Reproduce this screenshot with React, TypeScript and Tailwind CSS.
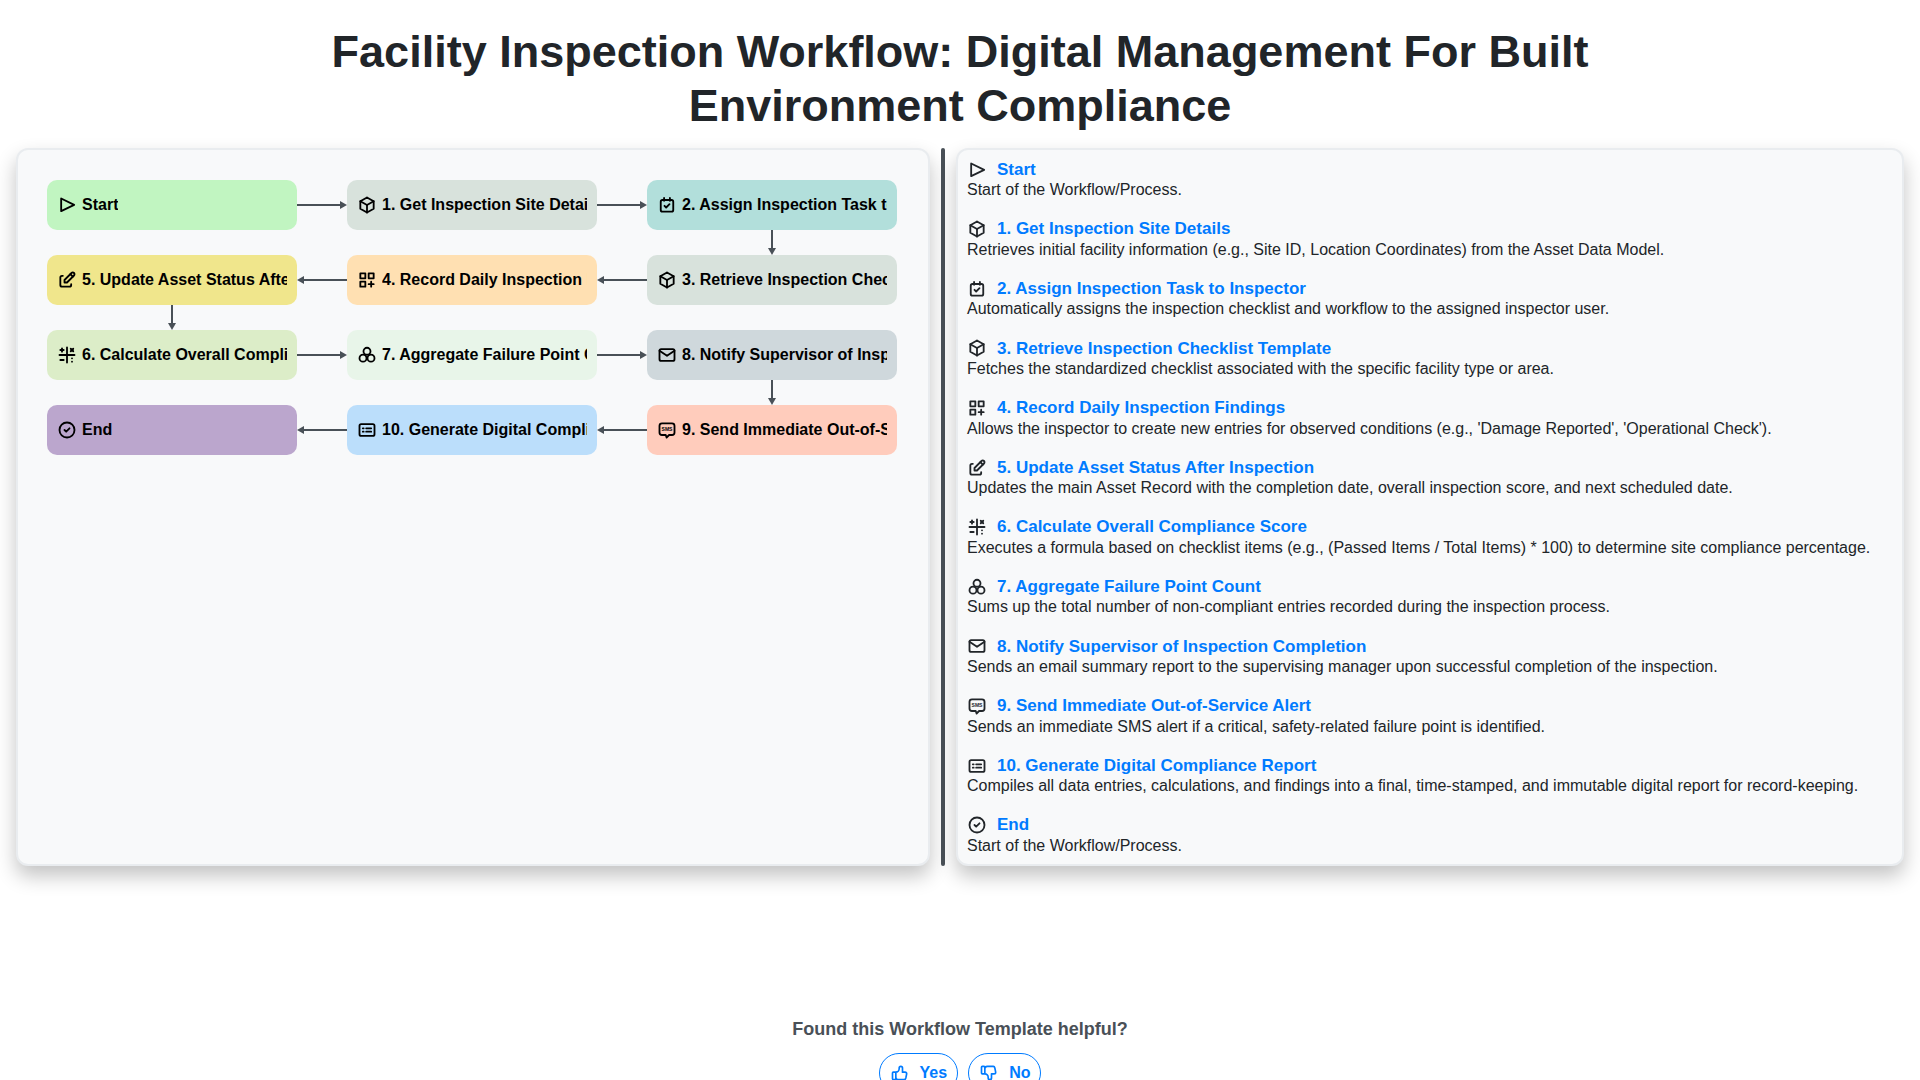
import type { ReactNode } from "react";
import { TbBox, TbEdit, TbCategoryPlus, TbMathSymbols, TbMail, TbCircleCheck, TbThumbUp, TbThumbDown } from "react-icons/tb";

const ic = { size: 20, strokeWidth: 2.2, className: "shrink-0" };

function Svg({ children }: { children: ReactNode }) {
  return (
    <svg xmlns="http://www.w3.org/2000/svg" width="20" height="20" viewBox="0 0 24 24" fill="none" stroke="currentColor" strokeWidth="2.2" strokeLinecap="round" strokeLinejoin="round" className="shrink-0">
      {children}
    </svg>
  );
}

const Play = () => (
  <Svg>
    <path d="M5 4.2l15.6 7.6L5 19.4z" />
  </Svg>
);

const CalendarTick = () => (
  <Svg>
    <rect x="4.5" y="6" width="15" height="14" rx="2" />
    <path d="M8.5 3.5V7M15.5 3.5V7M9 13l2 2 4-4" />
  </Svg>
);

const Cluster = () => (
  <Svg>
    <circle cx="12" cy="7.5" r="4.2" />
    <circle cx="7.2" cy="15.8" r="4.2" />
    <circle cx="16.8" cy="15.8" r="4.2" />
  </Svg>
);

const SmsBubble = () => (
  <Svg>
    <path d="M6 4h12a3 3 0 0 1 3 3v8a3 3 0 0 1-3 3h-3.5l-3 3-1-3H6a3 3 0 0 1-3-3V7a3 3 0 0 1 3-3z" />
    <text x="12" y="13.5" textAnchor="middle" fontSize="6" fontWeight="700" fontFamily="Liberation Sans" fill="currentColor" stroke="none">SMS</text>
  </Svg>
);

const ListCard = () => (
  <Svg>
    <rect x="3" y="5" width="18" height="14" rx="2" />
    <path d="M7 10h1M11 10h6M7 14h1M11 14h6" />
  </Svg>
);

const steps = [
  { icon: <Play />, title: "Start", text: "Start of the Workflow/Process." },
  { icon: <TbBox {...ic} />, title: "1. Get Inspection Site Details", text: "Retrieves initial facility information (e.g., Site ID, Location Coordinates) from the Asset Data Model." },
  { icon: <CalendarTick />, title: "2. Assign Inspection Task to Inspector", text: "Automatically assigns the inspection checklist and workflow to the assigned inspector user." },
  { icon: <TbBox {...ic} />, title: "3. Retrieve Inspection Checklist Template", text: "Fetches the standardized checklist associated with the specific facility type or area." },
  { icon: <TbCategoryPlus {...ic} />, title: "4. Record Daily Inspection Findings", text: "Allows the inspector to create new entries for observed conditions (e.g., 'Damage Reported', 'Operational Check')." },
  { icon: <TbEdit {...ic} />, title: "5. Update Asset Status After Inspection", text: "Updates the main Asset Record with the completion date, overall inspection score, and next scheduled date." },
  { icon: <TbMathSymbols {...ic} />, title: "6. Calculate Overall Compliance Score", text: "Executes a formula based on checklist items (e.g., (Passed Items / Total Items) * 100) to determine site compliance percentage." },
  { icon: <Cluster />, title: "7. Aggregate Failure Point Count", text: "Sums up the total number of non-compliant entries recorded during the inspection process." },
  { icon: <TbMail {...ic} />, title: "8. Notify Supervisor of Inspection Completion", text: "Sends an email summary report to the supervising manager upon successful completion of the inspection." },
  { icon: <SmsBubble />, title: "9. Send Immediate Out-of-Service Alert", text: "Sends an immediate SMS alert if a critical, safety-related failure point is identified." },
  { icon: <ListCard />, title: "10. Generate Digital Compliance Report", text: "Compiles all data entries, calculations, and findings into a final, time-stamped, and immutable digital report for record-keeping." },
  { icon: <TbCircleCheck {...ic} />, title: "End", text: "Start of the Workflow/Process." },
];

function Node({ step, className }: { step: number; className: string }) {
  return (
    <div className={`flex h-[50px] items-center gap-[5px] rounded-[10px] px-[10px] text-base font-bold text-black ${className}`}>
      {steps[step].icon}
      <span className="overflow-hidden whitespace-nowrap">{steps[step].title}</span>
    </div>
  );
}

function ArrowH({ left }: { left?: boolean }) {
  return (
    <svg viewBox="0 0 50 10" className={`h-[10px] w-[50px] self-center text-[#495057] ${left ? "rotate-180" : ""}`} fill="currentColor">
      <rect x="0" y="4" width="46" height="2" />
      <path d="M50 5l-7-4v8z" />
    </svg>
  );
}

function ArrowV() {
  return (
    <svg viewBox="0 0 10 25" className="h-[25px] w-[10px] justify-self-center text-[#495057]" fill="currentColor">
      <rect x="4" y="0" width="2" height="21" />
      <path d="M5 25l-4-7h8z" />
    </svg>
  );
}

export default function App() {
  return (
    <div className="bg-white font-['Liberation_Sans',Arial,sans-serif] text-[#212529]">
      <h1 className="mx-auto max-w-[1300px] px-4 pt-[25px] pb-[15px] text-center text-[45px] leading-[54px] font-bold">
        Facility Inspection Workflow: Digital Management For Built Environment Compliance
      </h1>

      <div className="flex items-stretch px-4">
        <div className="w-[914px] rounded-xl border-2 border-[#e9ecef] bg-[#f8f9fa] pt-[30px] pl-[29px] shadow-[0_10px_20px_rgba(0,0,0,0.24)]">
          <div className="grid grid-cols-[250px_50px_250px_50px_250px] grid-rows-[50px_25px_50px_25px_50px_25px_50px]">
            <Node step={0} className="bg-[#c1f5c1]" />
            <ArrowH />
            <Node step={1} className="bg-[#d8e2dc]" />
            <ArrowH />
            <Node step={2} className="bg-[#b2dfdb]" />

            <div className="col-span-4" />
            <ArrowV />

            <Node step={5} className="bg-[#f0e68c]" />
            <ArrowH left />
            <Node step={4} className="bg-[#ffe0b2]" />
            <ArrowH left />
            <Node step={3} className="bg-[#d8e2dc]" />

            <ArrowV />
            <div className="col-span-4" />

            <Node step={6} className="bg-[#dcedc8]" />
            <ArrowH />
            <Node step={7} className="bg-[#e8f5e9]" />
            <ArrowH />
            <Node step={8} className="bg-[#cfd8dc]" />

            <div className="col-span-4" />
            <ArrowV />

            <Node step={11} className="bg-[#bba6cd]" />
            <ArrowH left />
            <Node step={10} className="bg-[#bbdefb]" />
            <ArrowH left />
            <Node step={9} className="bg-[#ffccbc]" />
          </div>
        </div>

        <div className="mx-[11px] w-1 rounded-sm bg-[#495057]" />

        <div className="w-[948px] rounded-xl border-2 border-[#e9ecef] bg-[#f8f9fa] px-[9px] pt-[9px] pb-[9px] shadow-[0_10px_20px_rgba(0,0,0,0.24)]">
          {steps.map((s, i) => (
            <div key={s.title} className={i < steps.length - 1 ? "mb-[19px]" : ""}>
              <div className="flex h-[21.2px] items-center gap-[10px]">
                {s.icon}
                <a href="#" className="text-[17px] font-bold text-[#007bff]">{s.title}</a>
              </div>
              <p className="mt-px text-base leading-[18.4px]">{s.text}</p>
            </div>
          ))}
        </div>
      </div>

      <div className="mt-[149px] flex flex-col items-center">
        <p className="text-lg font-bold text-[#495057]">Found this Workflow Template helpful?</p>
        <div className="mt-[10px] flex gap-[10px] pb-3">
          <button className="flex h-10 items-center gap-[10px] rounded-[20px] border border-[#007bff] px-[10px] text-base font-bold text-[#007bff]">
            <TbThumbUp size={20} /> Yes
          </button>
          <button className="flex h-10 items-center gap-[10px] rounded-[20px] border border-[#007bff] px-[10px] text-base font-bold text-[#007bff]">
            <TbThumbDown size={20} /> No
          </button>
        </div>
      </div>
    </div>
  );
}
